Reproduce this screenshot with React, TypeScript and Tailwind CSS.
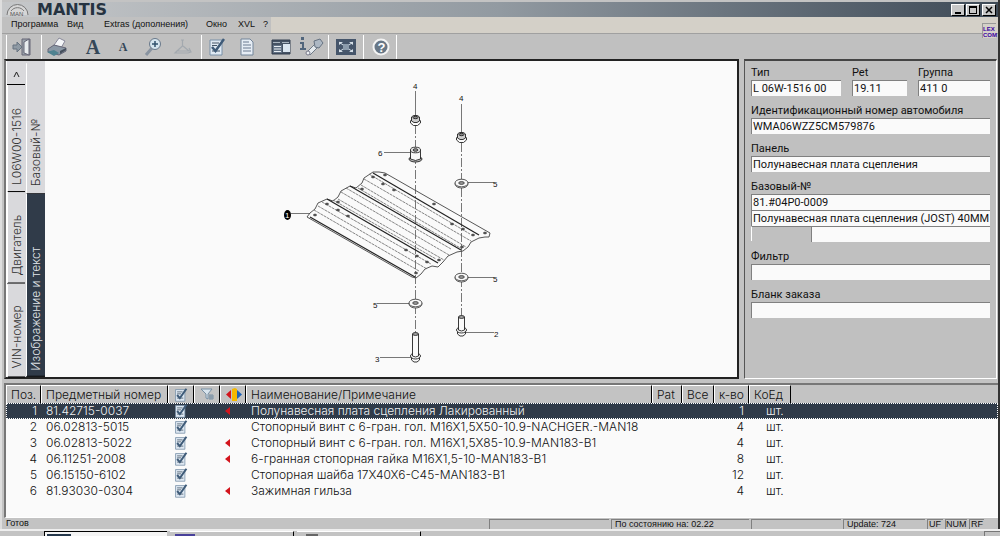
import type { ReactNode } from "react";

interface Part {
      pos: number;
      number: string;
      name: string;
      qty: number;
      changed: boolean;
}

const parts: Part[] = [
      { pos: 1, number: "81.42715-0037", name: "Полунавесная плата сцепления Лакированный", qty: 1, changed: true },
      { pos: 2, number: "06.02813-5015", name: "Стопорный винт с 6-гран. гол. M16X1,5X50-10.9-NACHGER.-MAN18", qty: 4, changed: false },
      { pos: 3, number: "06.02813-5022", name: "Стопорный винт с 6-гран. гол. M16X1,5X85-10.9-MAN183-B1", qty: 4, changed: true },
      { pos: 4, number: "06.11251-2008", name: "6-гранная стопорная гайка M16X1,5-10-MAN183-B1", qty: 8, changed: true },
      { pos: 5, number: "06.15150-6102", name: "Стопорная шайба 17X40X6-C45-MAN183-B1", qty: 12, changed: false },
      { pos: 6, number: "81.93030-0304", name: "Зажимная гильза", qty: 4, changed: true },
];

const holes = [
      [385, 175], [373, 177], [383, 184], [394, 190], [434, 204], [452, 224],
      [362, 189], [338, 202], [327, 204], [338, 210], [348, 216], [315, 215],
      [463, 229], [473, 235], [485, 233], [462, 247], [406, 250], [417, 256],
      [427, 262], [439, 260], [416, 273],
];

// ridge lines of the corrugated plate: x1, y1, x2, y2
const ridges = [
      [373, 173, 479, 235],
      [350, 186, 461, 250],
      [327, 199, 438, 263],
];

const folds = [
      [369, 174, 470, 234],
      [364, 179, 471, 241],
      [361, 185, 466, 247],
      [358, 188, 462, 249],
      [346, 188, 451, 249],
      [341, 192, 449, 255],
      [338, 199, 444, 260],
      [333, 200, 436, 259],
      [322, 202, 431, 264],
      [318, 206, 427, 269],
      [314, 210, 419, 271],
];

const Nut = ({ x, y }: { x: number; y: number }) => (
      <g fill="#fafafa" stroke="#222" strokeWidth="0.9">
            <path d={`M${x - 5} ${y + 1}v2l3 2.500h4l3-2.500v-2l-2-2.500h-6z`} />
            <path d={`M${x - 4} ${y - 3}l2-1.500h4l2 1.500v4l-2.500 1.500h-3l-2.500-1.500z`} fill="#ccc" />
            <ellipse cx={x} cy={y - 2.5} rx="2.500" ry="1.200" fill="#888" />
      </g>
);

const Washer = ({ x, y }: { x: number; y: number }) => (
      <g stroke="#333" fill="#fafafa" strokeWidth="0.8">
            <ellipse cx={x} cy={y + 1} rx="6.500" ry="4" />
            <ellipse cx={x} cy={y} rx="6.500" ry="3.800" />
            <ellipse cx={x} cy={y} rx="2.800" ry="1.400" fill="#999" />
      </g>
);

const Bolt = ({ x, y, length }: { x: number; y: number; length: number }) => (
      <g stroke="#222" fill="#fafafa" strokeWidth="0.9">
            <path d={`M${x - 4} ${y + length}v4l2.500 2h3l2.500-2v-4z`} />
            <ellipse cx={x} cy={y + length} rx="5" ry="3" />
            <path d={`M${x - 3} ${y}v${length}q3 2 6 0v-${length}`} />
            <ellipse cx={x} cy={y} rx="3" ry="1.400" fill="#aaa" />
      </g>
);

const Drawing = () => (
      <svg viewBox="45 61 692 316" className="h-full w-full" fontFamily="Liberation Sans, sans-serif" fontSize="8" fill="none">
            <g stroke="#555" strokeWidth="0.8">
                  <path d="M415.500 91v25M461.500 104v29M384 152.500h26M468 182.500h26M468 277.500h26M377 303.500h32M380 357.500h31M465 332.500h29M291 213.500h19" />
                  <path d="M415.500 125v230M461.500 143v190" strokeDasharray="9 2 2 2" />
            </g>
            <path
                  d="M310 213l5-4 3-6 9-4 6 2 5-4 3-6 9-5 6 2 6-5 2-5 9-6h6l6 1 105 60-1 4h-4l-6 1-8 4-3 5-5 4-6 1-9 4-5 6-5 5-6-1-7 3-4 5-5 4-4-1-105-60z"
                  stroke="#444"
                  strokeWidth="0.9"
            />
            <g stroke="#222" strokeWidth="1.200">
                  {ridges.map(([x1, y1, x2, y2]) => (
                        <line key={x1} x1={x1} y1={y1} x2={x2} y2={y2} />
                  ))}
                  <path d="M310 217l105 60" />
            </g>
            <g stroke="#666" strokeWidth="0.8" strokeDasharray="3 0.700">
                  {folds.map(([x1, y1, x2, y2]) => (
                        <line key={x1} x1={x1} y1={y1} x2={x2} y2={y2} />
                  ))}
            </g>
            {holes.map(([x, y]) => (
                  <ellipse key={`${x}-${y}`} cx={x} cy={y} rx="1.600" ry="1" fill="#555" stroke="#333" strokeWidth="0.5" />
            ))}
            <Nut x={415.5} y={120} />
            <Nut x={461.5} y={137} />
            <g stroke="#222" fill="#fafafa" strokeWidth="0.9">
                  <ellipse cx="415.500" cy="159" rx="6.500" ry="3" fill="#bbb" />
                  <path d="M410.500 150v9q5 3 10 0v-9" />
                  <ellipse cx="415.500" cy="150" rx="5" ry="2.800" />
                  <ellipse cx="415.500" cy="150" rx="2.500" ry="1.300" fill="#999" />
            </g>
            <Washer x={461.5} y={183} />
            <Washer x={461.5} y={277} />
            <Washer x={415.5} y={303} />
            <Bolt x={415.5} y={334} length={22} />
            <Bolt x={461.5} y={317} length={13} />
            <ellipse cx="287.500" cy="215" rx="3.500" ry="5" fill="#000" />
            <g fill="#111">
                  <text x="413" y="89">4</text>
                  <text x="459" y="101">4</text>
                  <text x="378" y="156">6</text>
                  <text x="493" y="187">5</text>
                  <text x="493" y="282">5</text>
                  <text x="373" y="308">5</text>
                  <text x="375" y="362">3</text>
                  <text x="494" y="337">2</text>
                  <text x="285" y="218" fill="#fff">1</text>
            </g>
      </svg>
);

const CheckDoc = ({ className }: { className: string }) => (
      <svg viewBox="0 0 16 18" className={className}>
            <path d="M1 2h12v15H1z" fill="#dfe9f3" stroke="#7890a8" />
            <path d="M3 5h7M3 7.500h5M3 13h8" stroke="#456" />
            <path d="M3 9l3.500 4L15 1" fill="none" stroke="#3f5b78" strokeWidth="2.500" />
      </svg>
);

const icons: Record<string, ReactNode> = {
      exit: (
            <>
                  <path d="M10 2h8v16h-8z" fill="#9aa3ab" stroke="#667" />
                  <path d="M12 5l5-3v16l-5-2z" fill="#e8ecee" stroke="#667" />
                  <path d="M1 8h4V5l5 5-5 5v-3H1z" fill="#8f9aa4" stroke="#667380" />
            </>
      ),
      print: (
            <>
                  <path d="M7 8l5-7 6 3-4 7z" fill="#f4f6f8" stroke="#889" />
                  <path d="M1 12l6-4 12 3v3l-7 4L1 15z" fill="#8b98a5" stroke="#667" />
                  <path d="M0 15l7-2 5 3-5 3z" fill="#4f8290" />
                  <path d="M13 14l6-3v2l-6 4z" fill="#454f5c" />
            </>
      ),
      zoom: (
            <>
                  <path d="M3 18l6-7" stroke="#8893a0" strokeWidth="3" />
                  <circle cx="12" cy="7" r="5.500" fill="#d5e5ef" stroke="#68788a" />
                  <path d="M12 4v6M9 7h6" stroke="#31516e" strokeWidth="1.500" />
            </>
      ),
      flask: (
            <path d="M8 3h3M9.500 3v6L4 14h12l-6-5M4 14l-2 2h13l3-1-2-4" fill="none" stroke="#a3a9af" strokeWidth="1.200" />
      ),
      doc: (
            <>
                  <path d="M4 2h9l3 3v13H4z" fill="#e6edf5" stroke="#73859a" />
                  <path d="M6 5h6M6 8h8M6 11h8M6 14h8" stroke="#6b7b90" />
            </>
      ),
      windows: (
            <>
                  <path d="M1 3h18v14H1z" fill="#465364" stroke="#354150" />
                  <path d="M2 5h7v1H2zM11 5h7v1h-7z" fill="#aab5c0" />
                  <path d="M2 8h9v8H2z" fill="#627285" />
                  <path d="M3 9.500h7M3 12h7M3 14.500h7" stroke="#e8edf2" />
                  <path d="M12 7h7v8h-7z" fill="#dbe6f0" />
            </>
      ),
      torch: (
            <>
                  <path d="M0 0h3v3H0zM-1 5h4v6h2v2h-6v-2h2V7h-2z" fill="#51657b" />
                  <path d="M6 15l8-8 3 3-8 8z" fill="#e5eaee" stroke="#6f7b88" />
                  <path d="M13 4l6-2 3 4-4 5-4-1z" fill="#adb8c4" stroke="#667281" />
                  <circle cx="7" cy="16" r="2" fill="#eef1f3" stroke="#778" />
            </>
      ),
      fit: (
            <>
                  <path d="M0 2h20v16H0z" fill="#45556a" />
                  <path d="M7 7h6v6H7z" fill="#8b9bab" />
                  <path d="M3 5h4L3 8zM17 5h-4l4 3zM3 15v-3l4 3zM17 15v-3l-4 3z" fill="#d6e0e8" />
                  <path d="M3 5l4 3M17 5l-4 3M3 15l4-3M17 15l-4-3" stroke="#d6e0e8" />
            </>
      ),
};

const Icon = ({ name }: { name: string }) => (
      <svg viewBox="0 0 20 20" className="h-5 w-5 overflow-visible">
            {icons[name]}
      </svg>
);

const ToolButton = ({ label, children }: { label: string; children: ReactNode }) => (
      <button aria-label={label} className="flex h-6 w-[30px] items-center justify-center">
            {children}
      </button>
);

const Divider = () => <div className="h-6 w-px bg-white" />;

const RedArrow = () => (
      <svg viewBox="0 0 5 8" className="mx-auto h-2 w-[5px]">
            <path d="M5 0v8L0 4z" fill="#d3141c" />
      </svg>
);

const VerticalTab = ({ label, className }: { label: string; className: string }) => (
      <button
            className={`flex min-h-0 rotate-180 items-center border-t border-r border-t-black border-r-white text-[12px] leading-4 whitespace-nowrap [text-orientation:sideways] [writing-mode:vertical-rl] ${className}`}
      >
            {label}
      </button>
);

const inputClass =
      "block h-4 w-full border-t border-l border-[#808080] bg-[#fafafa] px-px text-[11px] leading-[14px] outline-none";

const Field = ({ id, label, value, className }: { id: string; label: string; value?: string; className?: string }) => (
      <div className={className}>
            <label htmlFor={id} className="block text-[11px] leading-[14px] whitespace-nowrap">
                  {label}
            </label>
            <input id={id} defaultValue={value} className={inputClass} />
      </div>
);

const th =
      "h-[18px] overflow-hidden border-t border-r border-l border-t-white border-r-black border-l-white px-1 text-left font-light whitespace-nowrap";

const statusCell = "h-full border-t border-l border-[#808080] whitespace-nowrap";

export default function App() {
      return (
            <div className="flex h-screen min-h-[500px] flex-col overflow-hidden bg-[#c3c3c3] font-['Inter','Liberation_Sans',sans-serif] font-light text-[#111]">
                  <div className="flex min-h-0 flex-1 flex-col border-r-2 border-l-2 border-r-[#333] border-l-[#dedede] pt-[2px]">
                        {/* Title bar */}
                        <header className="flex h-[15px] shrink-0 items-center justify-between bg-linear-to-r from-[#c6c8ca] via-[#929aa1] to-[#3e4a57] pr-[2px] pl-1">
                              <div className="flex items-center gap-2">
                                    <svg viewBox="0 0 23 13" className="h-[13px] w-[23px]" fill="none" stroke="#777">
                                          <path d="M1 12a10.500 10.500 0 0 1 21 0" fill="#d6d6d6" />
                                          <path d="M5 8a8 8 0 0 1 13 0" />
                                          <text x="4" y="13" fontSize="6" fill="#555" stroke="none" fontFamily="Liberation Sans, sans-serif">MAN</text>
                                    </svg>
                                    <h1 className="font-['DejaVu_Sans',sans-serif] text-[16px] leading-[15px] font-bold text-[#263341]">MANTIS</h1>
                              </div>
                              <div className="flex items-center gap-px">
                                    <button aria-label="Свернуть" className="flex h-3 w-[14px] items-end justify-center border border-t-white border-r-black border-b-black border-l-white bg-[#c8c8c8] pb-px">
                                          <span className="h-[2px] w-[6px] bg-black" />
                                    </button>
                                    <button aria-label="Развернуть" className="flex h-3 w-[14px] items-center justify-center border border-t-white border-r-black border-b-black border-l-white bg-[#c8c8c8]">
                                          <span className="h-2 w-2 border border-t-2 border-black" />
                                    </button>
                                    <button aria-label="Закрыть" className="ml-px flex h-3 w-[14px] items-center justify-center border border-t-white border-r-black border-b-black border-l-white bg-[#c8c8c8]">
                                          <svg viewBox="0 0 8 8" className="h-2 w-2">
                                                <path d="M1 1l6 6M7 1l-6 6" stroke="#000" strokeWidth="1.500" />
                                          </svg>
                                    </button>
                              </div>
                        </header>

                        {/* Menu */}
                        <nav className="relative flex h-4 shrink-0 items-center bg-linear-to-r from-[#c0c0c0] from-27% to-[#d4d0c8] to-27% pl-[9px] font-['Liberation_Sans',sans-serif] text-[9px] font-normal">
                              <button className="w-14 text-left">Программа</button>
                              <button className="w-[37px] text-left">Вид</button>
                              <button className="w-[102px] text-left">Extras (дополнения)</button>
                              <button className="w-8 text-left">Окно</button>
                              <button className="w-[25px] text-left">XVL</button>
                              <button>?</button>
                              <div className="absolute top-[6px] right-[2px] w-[14px] border-t border-l border-[#999] bg-[#d4d0c8] pt-[2px] font-['Liberation_Sans',sans-serif] text-[6px] leading-[6px] font-bold text-[#3800a0]">
                                    LEX
                                    <br />
                                    COM
                              </div>
                        </nav>

                        {/* Toolbar */}
                        <div className="flex h-[26px] shrink-0 items-center border-t border-[#a0a0a0] bg-[#c0c0c0] pl-1">
                              <Divider />
                              <ToolButton label="Выход"><Icon name="exit" /></ToolButton>
                              <div className="w-1" />
                              <Divider />
                              <div className="flex">
                                    <ToolButton label="Печать"><Icon name="print" /></ToolButton>
                                    <div className="w-[6px]" />
                                    <ToolButton label="Крупнее"><span className="font-['Liberation_Serif',serif] text-[20px] font-bold text-[#344758]">A</span></ToolButton>
                                    <ToolButton label="Мельче"><span className="font-['Liberation_Serif',serif] text-[12px] font-bold text-[#344758]">A</span></ToolButton>
                                    <ToolButton label="Увеличить"><Icon name="zoom" /></ToolButton>
                                    <ToolButton label="Очистить"><Icon name="flask" /></ToolButton>
                              </div>
                              <div className="w-[3px]" />
                              <Divider />
                              <ToolButton label="Отметить"><CheckDoc className="h-[18px] w-4" /></ToolButton>
                              <ToolButton label="Документ"><Icon name="doc" /></ToolButton>
                              <div className="w-1" />
                              <ToolButton label="Окна"><Icon name="windows" /></ToolButton>
                              <ToolButton label="Поиск"><Icon name="torch" /></ToolButton>
                              <div className="w-[2px]" />
                              <Divider />
                              <div className="w-[2px]" />
                              <ToolButton label="Во весь экран"><Icon name="fit" /></ToolButton>
                              <div className="w-[2px]" />
                              <Divider />
                              <div className="w-[2px]" />
                              <ToolButton label="Справка">
                                    <svg viewBox="0 0 18 18" className="h-[18px] w-[18px]">
                                          <circle cx="9" cy="9" r="7.500" fill="#687786" stroke="#f4f4f4" strokeWidth="2" />
                                          <text x="5.500" y="13.500" fontSize="13" fontWeight="bold" fill="#fff" fontFamily="Liberation Sans, sans-serif">?</text>
                                    </svg>
                              </ToolButton>
                              <Divider />
                        </div>

                        {/* Drawing and vehicle data */}
                        <div className="flex min-h-0 flex-1 gap-[5px] pr-px pl-[2px]">
                              <main className="flex min-w-0 flex-1 border-2 border-t-[#222] border-r-[#222] border-b-[#222] border-l-[#777] bg-[#fafafa]">
                                    <div className="flex w-[39px] shrink-0 gap-px border-l border-white bg-[#d9d9dc] pt-[2px] text-[#333]">
                                          <div className="flex w-[18px] shrink-0 flex-col">
                                                <button aria-label="Вверх" className="flex h-[22px] shrink-0 items-center justify-center border-b border-black">
                                                      <svg viewBox="0 0 7 6" className="h-[6px] w-[7px]" fill="none" stroke="#222"><path d="M1 6l2.500-5L6 6" /></svg>
                                                </button>
                                                <VerticalTab label="L06W00-1516" className="flex-[109] pt-[6px]" />
                                                <VerticalTab label="Двигатель" className="flex-[91] pt-[7px]" />
                                                <VerticalTab label="VIN-номер" className="flex-[92] pt-2" />
                                          </div>
                                          <div className="flex w-[19px] shrink-0 flex-col">
                                                <VerticalTab label="Базовый-№" className="flex-[129] pt-[7px]" />
                                                <VerticalTab label="Изображение и текст" className="flex-[185] bg-[#303b49] pt-[5px] text-[#e4e8ec]" />
                                          </div>
                                    </div>
                                    <div className="min-w-0 flex-1">
                                          <Drawing />
                                    </div>
                              </main>

                              <aside className="flex w-[253px] shrink-0 flex-col gap-2 border border-t-2 border-t-[#444] border-r-white border-b-white border-l-[#555] bg-[#c0c0c0] px-[6px] pt-[5px] font-['Roboto','Liberation_Sans',sans-serif] font-normal">
                                    <div className="flex gap-[11px]">
                                          <Field id="type" label="Тип" value="L 06W-1516 00" className="w-[90px]" />
                                          <Field id="pet" label="Pet" value="19.11" className="w-[55px]" />
                                          <Field id="group" label="Группа" value="411 0" className="min-w-0 flex-1" />
                                    </div>
                                    <Field id="vin" label="Идентификационный номер автомобиля" value="WMA06WZZ5CM579876" />
                                    <Field id="panel" label="Панель" value="Полунавесная плата сцепления" />
                                    <div>
                                          <Field id="base" label="Базовый-№" value="81.#04P0-0009" />
                                          <input aria-label="Описание" defaultValue="Полунавесная плата сцепления (JOST) 40MM" className={inputClass} />
                                          <div className="flex">
                                                <div className="h-[15px] w-[60px] shrink-0 border-t border-l border-t-[#808080] border-l-white" />
                                                <input aria-label="Дополнение" className={inputClass} />
                                          </div>
                                    </div>
                                    <Field id="filter" label="Фильтр" />
                                    <Field id="order" label="Бланк заказа" />
                              </aside>
                        </div>

                        {/* Parts list */}
                        <section className="mt-1 ml-[2px] h-[135px] shrink-0 overflow-hidden border-t-2 border-b border-l-2 border-t-[#777] border-b-white border-l-[#777] bg-[#fafafa]">
                              <table className="w-full table-fixed border-separate border-spacing-0 text-[12px] leading-[14px]">
                                    <colgroup>
                                          <col className="w-[35px]" />
                                          <col className="w-[127px]" />
                                          <col className="w-[26px]" />
                                          <col className="w-[26px]" />
                                          <col className="w-[26px]" />
                                          <col className="w-[406px]" />
                                          <col className="w-[30px]" />
                                          <col className="w-8" />
                                          <col className="w-[35px]" />
                                          <col className="w-[42px]" />
                                          <col />
                                    </colgroup>
                                    <thead className="bg-[#c3c3c3]">
                                          <tr>
                                                <th className={th}>Поз.</th>
                                                <th className={th}>Предметный номер</th>
                                                <th className={th} aria-label="Отметка"><CheckDoc className="mx-auto h-[14px] w-[14px]" /></th>
                                                <th className={th} aria-label="Фильтр">
                                                      <svg viewBox="0 0 14 13" className="mx-auto h-[13px] w-[14px]" fill="#d9e4ed" stroke="#7890a4">
                                                            <path d="M1 1h11L8 6v5l-2-1V6z" />
                                                            <path d="M10 6v6M12 6v6M9 8h5M9 10h5" />
                                                      </svg>
                                                </th>
                                                <th className={th} aria-label="Изменения">
                                                      <svg viewBox="0 0 17 13" className="mx-auto h-[13px] w-[17px]">
                                                            <path d="M7 1l3-1 2 1v12H7z" fill="#f5b800" />
                                                            <path d="M6 2v9L1 6.500z" fill="#d3141c" />
                                                            <path d="M12 2v9l5-4.500z" fill="#1f62b5" />
                                                      </svg>
                                                </th>
                                                <th className={th}>Наименование/Примечание</th>
                                                <th className={th}>Pat</th>
                                                <th className={th}>Все</th>
                                                <th className={th}>к-во</th>
                                                <th className={th}>КоЕд</th>
                                                <th aria-label="Прочее" />
                                          </tr>
                                    </thead>
                                    <tbody>
                                          {parts.map((p) => (
                                                <tr
                                                      key={p.pos}
                                                      className={
                                                            p.pos === 1
                                                                  ? "bg-[#303b49] text-[#eef0f2] outline outline-dotted -outline-offset-1 outline-white"
                                                                  : ""
                                                      }
                                                >
                                                      <td className="h-4 pr-1 text-right">{p.pos}</td>
                                                      <td className="pl-[5px] whitespace-nowrap">{p.number}</td>
                                                      <td><CheckDoc className="mx-auto h-[14px] w-[14px]" /></td>
                                                      <td />
                                                      <td className="pr-[12px]">{p.changed && <RedArrow />}</td>
                                                      <td className="overflow-hidden pl-[5px] whitespace-nowrap">{p.name}</td>
                                                      <td />
                                                      <td />
                                                      <td className="pr-[5px] text-right">{p.qty}</td>
                                                      <td className="pl-[17px]">шт.</td>
                                                      <td />
                                                </tr>
                                          ))}
                                    </tbody>
                              </table>
                        </section>

                        {/* Status bar */}
                        <footer className="flex h-[11px] shrink-0 gap-[2px] pt-px pr-[14px] pl-1 font-['Liberation_Sans',sans-serif] text-[9px] leading-[9px] font-normal">
                              <div className="min-w-0 flex-1">Готов</div>
                              <div className={`${statusCell} w-[120px]`} />
                              <div className={`${statusCell} w-[138px] pl-[3px]`}>По состоянию на: 02.22</div>
                              <div className={`${statusCell} w-[90px]`} />
                              <div className={`${statusCell} w-[82px] pl-[3px]`}>Update: 724</div>
                              <div className={`${statusCell} w-4 pl-px`}>UF</div>
                              <div className={`${statusCell} w-[22px]`}>NUM</div>
                              <div className={`${statusCell} w-[15px] pl-px`}>RF</div>
                        </footer>
                  </div>

                  {/* Taskbar */}
                  <div className="flex h-[7px] shrink-0 items-end gap-[3px] border-t-2 border-t-[#eee] pl-11">
                        <div className="h-[5px] w-[123px] border-t border-l border-black bg-[#f4f4f4] pt-[2px] pl-[2px]">
                              <div className="h-[2px] w-6 bg-[#26384c]" />
                        </div>
                        <div className="h-[5px] w-[124px] border-t border-r border-t-white border-r-black pt-[2px] pl-[5px]">
                              <div className="h-[2px] w-5 bg-[#48409a]" />
                        </div>
                        <div className="h-[5px] w-[124px] border-t border-r border-t-white border-r-black pt-[2px] pl-[9px]">
                              <div className="h-[2px] w-3 bg-[#666]" />
                        </div>
                        <div className="ml-auto h-[5px] w-4 border-t border-l border-[#777]" />
                  </div>
            </div>
      );
}
